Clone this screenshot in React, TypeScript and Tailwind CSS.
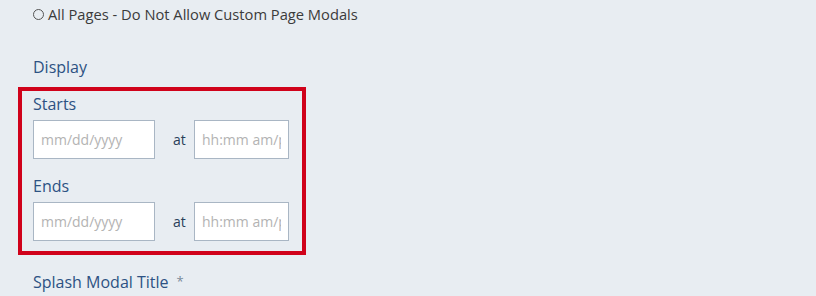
export default function App() {
	const font = { fontFamily: '"Open Sans", "Lato", sans-serif' };
	return (
		<div className="h-[296px] w-[816px] overflow-hidden bg-[#e8edf2]" style={font}>
			<div className="pl-[18px]">
				{/* Radio option */}
				<div className="flex h-[28px] items-center pl-[15px] text-[14.7px] text-[#3b3b3b]">
					<span className="mr-[4px] inline-block h-[11px] w-[11px] rounded-full border border-[#555]" />
					<span>All Pages - Do Not Allow Custom Page Modals</span>
				</div>

				<div className="mt-[28px] flex h-[22px] items-center pl-[15px] text-[16px] text-[#2d5283]">Display</div>

				{/* Highlighted date range */}
				<div className="mt-[9px] w-[288px] border-4 border-[#d0021b] px-[11px] pt-[3px] pb-[10px]">
					<DateRow label="Starts" />
					<div className="h-[17px]" />
					<DateRow label="Ends" />
				</div>

				<div className="mt-[17px] flex h-[20px] items-center pl-[15px] text-[16px] text-[#2d5283]">
					Splash Modal Title
					<span className="ml-[8px] text-[13px] text-[#7a8a9a]">*</span>
				</div>
			</div>
		</div>
	);
}

function DateRow({ label }: { label: string }) {
	return (
		<div>
			<div className="flex h-[20px] items-center text-[16px] text-[#2d5283]">{label}</div>
			<div className="mt-[6px] flex items-center">
				<input
					type="text"
					placeholder="mm/dd/yyyy"
					className="h-[39px] w-[122px] border border-[#a9b6c4] bg-white px-[7px] text-[14px] text-[#333] outline-none placeholder:text-[#b3b3b3]"
				/>
				<span className="w-[39px] pl-[18px] text-[14px] text-[#2a3f5a]">at</span>
				<input
					type="text"
					placeholder="hh:mm am/pm"
					className="h-[39px] w-[95px] border border-[#a9b6c4] bg-white px-[7px] text-[14px] text-[#333] outline-none placeholder:text-[#b3b3b3]"
				/>
			</div>
		</div>
	);
}
